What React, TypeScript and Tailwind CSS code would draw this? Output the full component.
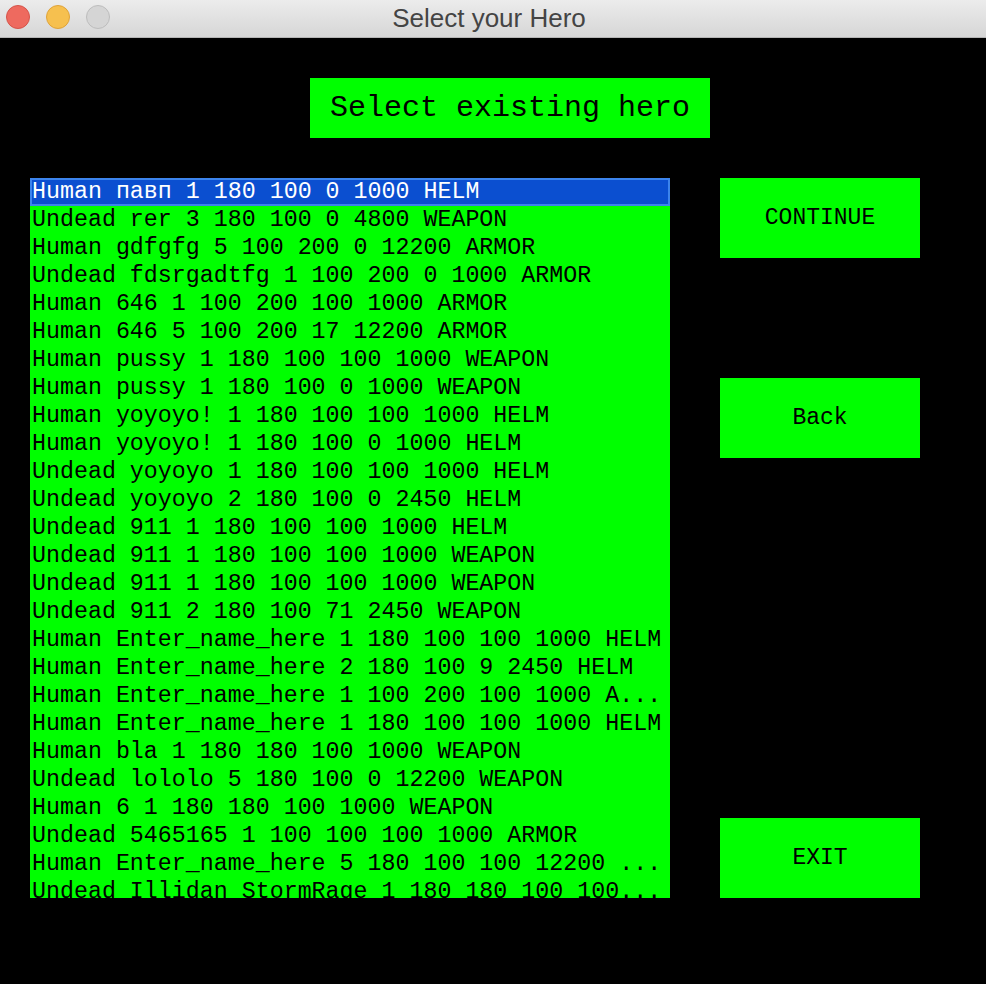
import React from 'react';

const heroes: string[] = [
  'Human павп 1 180 100 0 1000 HELM',
  'Undead rer 3 180 100 0 4800 WEAPON',
  'Human gdfgfg 5 100 200 0 12200 ARMOR',
  'Undead fdsrgadtfg 1 100 200 0 1000 ARMOR',
  'Human 646 1 100 200 100 1000 ARMOR',
  'Human 646 5 100 200 17 12200 ARMOR',
  'Human pussy 1 180 100 100 1000 WEAPON',
  'Human pussy 1 180 100 0 1000 WEAPON',
  'Human yoyoyo! 1 180 100 100 1000 HELM',
  'Human yoyoyo! 1 180 100 0 1000 HELM',
  'Undead yoyoyo 1 180 100 100 1000 HELM',
  'Undead yoyoyo 2 180 100 0 2450 HELM',
  'Undead 911 1 180 100 100 1000 HELM',
  'Undead 911 1 180 100 100 1000 WEAPON',
  'Undead 911 1 180 100 100 1000 WEAPON',
  'Undead 911 2 180 100 71 2450 WEAPON',
  'Human Enter_name_here 1 180 100 100 1000 HELM',
  'Human Enter_name_here 2 180 100 9 2450 HELM',
  'Human Enter_name_here 1 100 200 100 1000 A...',
  'Human Enter_name_here 1 180 100 100 1000 HELM',
  'Human bla 1 180 180 100 1000 WEAPON',
  'Undead lololo 5 180 100 0 12200 WEAPON',
  'Human 6 1 180 180 100 1000 WEAPON',
  'Undead 5465165 1 100 100 100 1000 ARMOR',
  'Human Enter_name_here 5 180 100 100 12200 ...',
  'Undead Illidan StormRage 1 180 180 100 100...',
];

const mono = "font-['Liberation_Mono','Courier_New',monospace]";

const SideButton: React.FC<{ label: string }> = ({ label }) => (
  <button className={`w-[200px] h-[80px] bg-[#00ff00] text-black text-[23px] ${mono} flex items-center justify-center`}>
    {label}
  </button>
);

export default function App() {
  const [selected, setSelected] = React.useState(0);

  return (
    <div className="w-[986px] h-[984px] bg-black flex flex-col overflow-hidden">
      {/* window title bar */}
      <div className="relative h-[38px] shrink-0 bg-gradient-to-b from-[#ececec] to-[#d6d6d6] border-b border-[#b5b5b5] flex items-center justify-center">
        <div className="absolute left-[6px] top-[5px] flex gap-[16px]">
          <span className="w-[24px] h-[24px] rounded-full bg-[#ee6a5f] border border-[#d5544a]" />
          <span className="w-[24px] h-[24px] rounded-full bg-[#f6c04f] border border-[#dfa33a]" />
          <span className="w-[24px] h-[24px] rounded-full bg-[#d5d5d5] border border-[#bdbdbd]" />
        </div>
        <span className="text-[#444444] text-[26px] leading-none font-['Liberation_Sans',Arial,sans-serif] mt-[-2px] mr-[8px]">Select your Hero</span>
      </div>

      <div className="flex-1">
        <div className="flex justify-center pt-[40px] pl-[34px]">
          <div className={`w-[400px] h-[60px] bg-[#00ff00] text-black text-[30px] ${mono} flex items-center justify-center`}>
            Select existing hero
          </div>
        </div>

        <div className="flex pl-[30px] pt-[40px] gap-[50px]">
          <div className="w-[640px] h-[720px] bg-[#00ff00] overflow-hidden">
            {heroes.map((h, i) => (
              <div
                key={i}
                onClick={() => setSelected(i)}
                className={`h-[28px] text-[23.3px] whitespace-nowrap ${mono} ${
                  selected === i
                    ? 'bg-[#0b4fd0] border-2 border-[#3c84ec] text-white pl-[0px] leading-[24px]'
                    : 'text-black pl-[2px] leading-[28px]'
                }`}
              >
                {h}
              </div>
            ))}
          </div>

          <div className="flex flex-col">
            <SideButton label="CONTINUE" />
            <div className="h-[120px]" />
            <SideButton label="Back" />
            <div className="h-[360px]" />
            <SideButton label="EXIT" />
          </div>
        </div>
      </div>
    </div>
  );
}
